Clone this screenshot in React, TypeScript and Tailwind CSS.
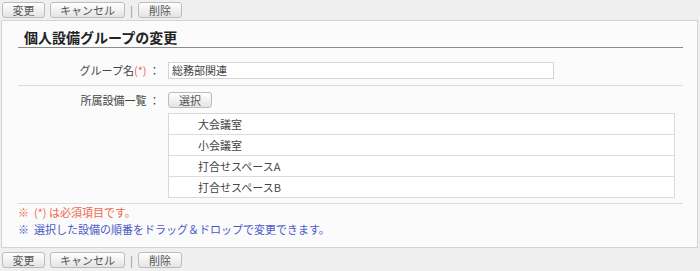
import React from "react";

const font = { fontFamily: '"Noto Sans CJK JP", "Noto Sans", sans-serif' };

function Btn({ label, w }: { label: string; w: string }) {
  return (
    <button
      className={`h-[16px] ${w} rounded-[3px] border border-[#bcbcbc] bg-gradient-to-b from-[#ffffff] to-[#e4e4e4] text-[11px] leading-[14px] text-[#555] flex items-center justify-center`}
    >
      {label}
    </button>
  );
}

function ButtonBar() {
  return (
    <div className="flex items-center h-[20px] pl-[2px]">
      <Btn label="変更" w="w-[43px]" />
      <div className="w-[5px]" />
      <Btn label="キャンセル" w="w-[75px]" />
      <span className="w-[13px] text-center text-[11px] text-[#888]">|</span>
      <Btn label="削除" w="w-[44px]" />
    </div>
  );
}

const facilities = ["大会議室", "小会議室", "打合せスペースA", "打合せスペースB"];

export default function App() {
  return (
    <div style={font} className="w-[700px] h-[271px] bg-[#efefef] text-[#444] overflow-hidden">
      <ButtonBar />
      <div className="ml-[1px] mr-[2px] h-[228px] border border-[#d4d4d4] bg-[#fbfbfb] pl-[16px] pr-[14px] pt-[6px]">
        <div className="h-[21px] border-b border-[#8a8a8a] pl-[6px] text-[14px] font-bold leading-[20px] text-[#222]">
          個人設備グループの変更
        </div>

        <div className="flex items-start h-[38px] pt-[14px] border-b border-[#dcdcdc]">
          <div className="w-[142px] text-right text-[11px] leading-[17px]">
            グループ名<span className="text-[#f0674f]">(*)</span> ：
          </div>
          <div className="ml-[8px] h-[17px] w-[386px] border border-[#d4d4d4] bg-white px-[3px] text-[11px] leading-[15px]">
            総務部関連
          </div>
        </div>

        <div className="flex items-start h-[118px] pt-[6px] border-b border-[#dcdcdc]">
          <div className="w-[142px] text-right text-[11px] leading-[16px]">所属設備一覧 ：</div>
          <div className="ml-[8px] flex flex-col">
            <Btn label="選択" w="w-[44px]" />
            <div className="mt-[5px] w-[507px] border border-[#d9d9d9] bg-white">
              {facilities.map((f, i) => (
                <div
                  key={f}
                  className={`pl-[29px] text-[11px] leading-[20px] text-[#444] ${i > 0 ? "h-[21px] border-t border-[#dcdcdc]" : "h-[20px]"}`}
                >
                  {f}
                </div>
              ))}
            </div>
          </div>
        </div>

        <div className="text-[11px] leading-[17px]">
          <div className="text-[#f0674f]">※&nbsp; (*) は必須項目です。</div>
          <div className="text-[#4a58c8]">※&nbsp; 選択した設備の順番をドラッグ＆ドロップで変更できます。</div>
        </div>
      </div>
      <div className="pt-[2px]">
        <ButtonBar />
      </div>
    </div>
  );
}
